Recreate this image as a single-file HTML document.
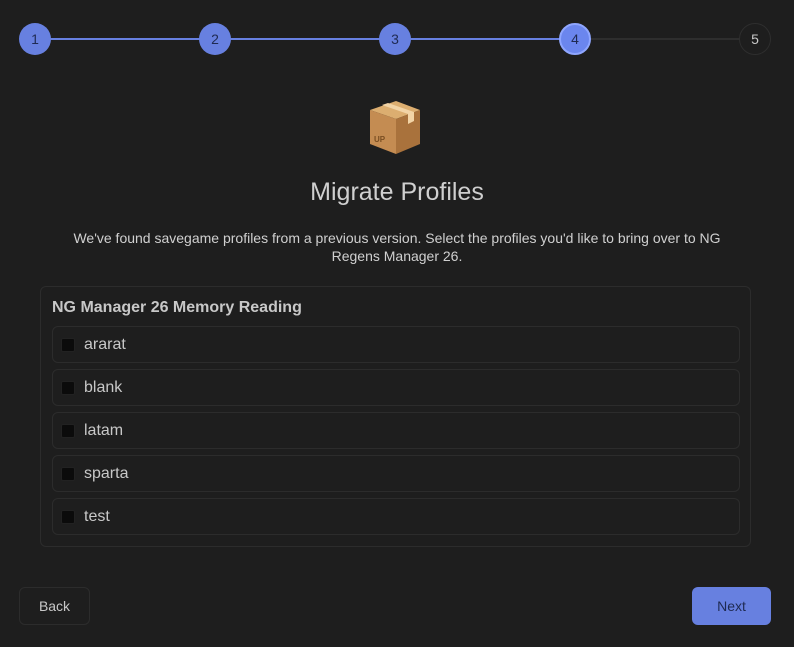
<!DOCTYPE html>
<html><head><meta charset="utf-8"><style>
*{box-sizing:border-box;margin:0;padding:0}
html,body{width:794px;height:647px;background:#1e1e1e;overflow:hidden;font-family:"Liberation Sans","DejaVu Sans",sans-serif;color:#c8c8c8}
.abs{position:absolute}
.line{position:absolute;top:38px;height:2px}
.c{position:absolute;top:23px;width:32px;height:32px;border-radius:50%;background:#6780e0;color:#1f2a52;font-size:14px;display:flex;align-items:center;justify-content:center}
.card{position:absolute;left:40px;top:286px;width:711px;height:261px;border:1px solid #2c2c2c;border-radius:6px}
.row{position:absolute;left:11px;width:688px;height:37px;border:1px solid #2c2c2c;border-radius:6px;font-size:16px;color:#c8c8c8}
.row i{position:absolute;left:8px;top:11px;width:14px;height:14px;background:#0b0b0b;border:1px solid #222;border-radius:2px}
.row span{position:absolute;left:31px;top:9px}
.btn{position:absolute;top:587px;height:38px;border-radius:6px;font-size:14px;display:flex;align-items:center;justify-content:center}
</style></head><body>
<div class="line" style="left:50px;width:510px;background:#6780e0"></div>
<div class="line" style="left:590px;width:150px;background:#2e2e2e"></div>
<div class="c" style="left:19px">1</div>
<div class="c" style="left:199px">2</div>
<div class="c" style="left:379px">3</div>
<div class="c" style="left:559px;background:#6b86ee;border:2px solid #8fa6ff">4</div>
<div class="c" style="left:739px;background:#1e1e1e;border:1px solid #2e2e2e;color:#c8c8c8">5</div>
<svg class="abs" style="left:368px;top:100px" width="54" height="56" viewBox="0 0 54 56">
<polygon points="28,1 52,10 28,19 2,10" fill="#dcae70"/>
<polygon points="2,10 28,19 28,54 2,44" fill="#c48c52"/>
<polygon points="52,10 28,19 28,54 52,44" fill="#a9723c"/>
<polygon points="14,5 40,14 40,24 46,21 46,12 20,3" fill="#f2d4a6"/>
<text x="6" y="42" font-size="8" fill="#7a4e22" font-family="Liberation Sans" font-weight="bold">UP</text>
</svg>
<div class="abs" style="left:0;width:794px;top:178px;text-align:center;font-size:25px;color:#cfcfcf">Migrate Profiles</div>
<div class="abs" style="left:57px;width:680px;top:229px;text-align:center;font-size:14px;line-height:18px;color:#d0d0d0">We've found savegame profiles from a previous version. Select the profiles you'd like to bring over to NG Regens Manager 26.</div>
<div class="card">
<div class="abs" style="left:11px;top:12px;font-size:16px;font-weight:bold;color:#c8c8c8">NG Manager 26 Memory Reading</div>
<div class="row" style="top:39px"><i></i><span>ararat</span></div>
<div class="row" style="top:82px"><i></i><span>blank</span></div>
<div class="row" style="top:125px"><i></i><span>latam</span></div>
<div class="row" style="top:168px"><i></i><span>sparta</span></div>
<div class="row" style="top:211px"><i></i><span>test</span></div>
</div>
<div class="btn" style="left:19px;width:71px;border:1px solid #2c2c2c;color:#c8c8c8">Back</div>
<div class="btn" style="left:692px;width:79px;background:#6780e0;color:#1f2a52">Next</div>
</body></html>
